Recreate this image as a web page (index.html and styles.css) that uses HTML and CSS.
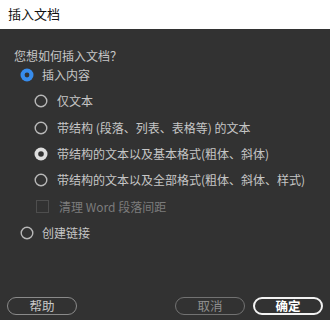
FILE: index.html
```
<!DOCTYPE html>
<html lang="zh-CN">
<head>
<meta charset="utf-8">
<link rel="stylesheet" href="styles.css">
</head>
<body>
<div class="dialog">
  <div class="titlebar">插入文档</div>
  <div class="content">
    <div class="question">您想如何插入文档？</div>
    <div class="row lvl1">
      <svg class="radio" viewBox="0 0 14 14"><circle cx="7" cy="7" r="6.5" fill="#378cec"/><circle cx="7" cy="7" r="2.4" fill="#323232"/></svg>
      <span>插入内容</span>
    </div>
    <div class="row lvl2">
      <svg class="radio" viewBox="0 0 14 14"><circle cx="7" cy="7" r="5.8" fill="none" stroke="#b8b8b8" stroke-width="1.4"/></svg>
      <span>仅文本</span>
    </div>
    <div class="row lvl2">
      <svg class="radio" viewBox="0 0 14 14"><circle cx="7" cy="7" r="5.8" fill="none" stroke="#b8b8b8" stroke-width="1.4"/></svg>
      <span>带结构 (段落、列表、表格等) 的文本</span>
    </div>
    <div class="row lvl2">
      <svg class="radio" viewBox="0 0 14 14"><circle cx="7" cy="7" r="6.5" fill="#dedede"/><circle cx="7" cy="7" r="2.8" fill="#323232"/></svg>
      <span>带结构的文本以及基本格式(粗体、斜体)</span>
    </div>
    <div class="row lvl2">
      <svg class="radio" viewBox="0 0 14 14"><circle cx="7" cy="7" r="5.8" fill="none" stroke="#b8b8b8" stroke-width="1.4"/></svg>
      <span>带结构的文本以及全部格式(粗体、斜体、样式)</span>
    </div>
    <div class="row lvl2 disabled">
      <span class="checkbox"></span>
      <span>清理 Word 段落间距</span>
    </div>
    <div class="row lvl1">
      <svg class="radio" viewBox="0 0 14 14"><circle cx="7" cy="7" r="5.8" fill="none" stroke="#b8b8b8" stroke-width="1.4"/></svg>
      <span>创建链接</span>
    </div>
  </div>
  <div class="footer">
    <button class="btn">帮助</button>
    <div class="spacer"></div>
    <button class="btn cancel">取消</button>
    <button class="btn primary">确定</button>
  </div>
</div>
</body>
</html>
```
FILE: styles.css
```
html, body {
  margin: 0;
  padding: 0;
  background: #323232;
}
.dialog {
  width: 330px;
  height: 320px;
  display: flex;
  flex-direction: column;
  background: #323232;
  font-family: "Noto Sans CJK SC", "Microsoft YaHei", sans-serif;
  font-size: 12px;
  color: #c6c6c6;
  overflow: hidden;
}
.titlebar {
  height: 29px;
  background: #ffffff;
  color: #111;
  font-size: 13px;
  line-height: 27px;
  padding-left: 8px;
}
.content {
  padding: 18px 0 0 0;
}
.question {
  padding-left: 14px;
  line-height: 18px;
  height: 18px;
}
.question + .row { margin-top: -3px; }
.row {
  display: flex;
  align-items: center;
  height: 26.3px;
}
.row span { white-space: nowrap; line-height: 18px; }
.lvl1 { padding-left: 20px; }
.lvl2 { padding-left: 34px; }
.radio {
  width: 14px;
  height: 14px;
  flex: none;
}
.lvl1 .radio { margin-right: 8px; }
.lvl2 .radio { margin-right: 9px; }
.checkbox {
  width: 11px;
  height: 11px;
  border: 1px solid #4e4e4e;
  margin-left: 2px;
  margin-right: 10px;
  flex: none;
}
.disabled { color: #7c7c7c; }
.footer {
  margin-top: auto;
  display: flex;
  align-items: center;
  padding: 0 7px 5px 7px;
  gap: 8px;
}
.spacer { flex: 1; }
.btn {
  width: 70px;
  height: 18px;
  box-sizing: border-box;
  border-radius: 9px;
  border: 1px solid #8a8a8a;
  background: transparent;
  color: #c8c8c8;
  font-family: "Noto Sans CJK SC", sans-serif;
  font-size: 12.5px;
  line-height: 14px;
  padding: 0;
}
.cancel {
  border-color: #727272;
  color: #8e8e8e;
}
.primary {
  border: 2px solid #f2f2f2;
  color: #ffffff;
  font-weight: bold;
}
```
